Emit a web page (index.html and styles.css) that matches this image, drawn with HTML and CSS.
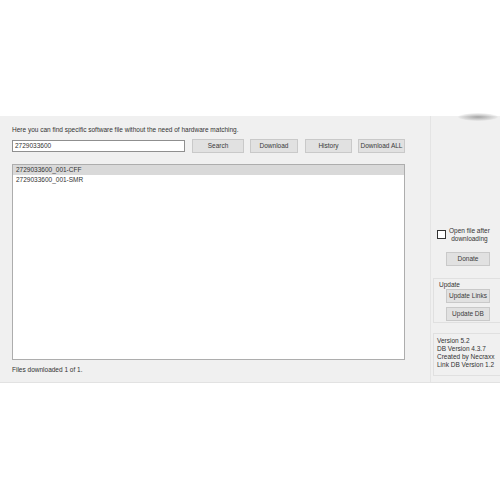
FILE: index.html
```html
<!DOCTYPE html>
<html>
<head>
<meta charset="utf-8">
<link rel="stylesheet" href="styles.css">
</head>
<body>
<div class="spacer"></div>
<div class="window">
  <div class="shadow"></div>
  <div class="main">
    <div class="intro">Here you can find specific software file without the need of hardware matching.</div>
    <div class="toolbar">
      <div class="input">2729033600</div>
      <div class="btn b-search">Search</div>
      <div class="btn b-dl">Download</div>
      <div class="btn b-hist">History</div>
      <div class="btn b-all">Download ALL</div>
    </div>
    <div class="list">
      <div class="row sel">2729033600_001-CFF</div>
      <div class="row">2729033600_001-SMR</div>
    </div>
    <div class="status">Files downloaded 1 of 1.</div>
  </div>
  <div class="side">
    <div class="check">
      <span class="box"></span>
      <span class="clabel">Open file after<br>downloading</span>
    </div>
    <div class="btn sbtn donate">Donate</div>
    <div class="group">
      <div class="glabel">Update</div>
      <div class="btn sbtn">Update Links</div>
      <div class="btn sbtn">Update DB</div>
    </div>
    <div class="info">
      <div>Version 5.2</div>
      <div>DB Version 4.3.7</div>
      <div>Created by Necraxx</div>
      <div>Link DB Version 1.2</div>
    </div>
  </div>
</div>
</body>
</html>
```

FILE: styles.css
```css
html, body {
  margin: 0;
  padding: 0;
  background: #ffffff;
  font-family: "Liberation Sans", "DejaVu Sans", sans-serif;
  font-size: 6.5px;
  color: #333333;
}
.spacer { height: 116px; }
.window {
  position: relative;
  height: 266px;
  background: #f0f0f0;
  border-bottom: 1px solid #e2e2e2;
  display: flex;
}
.shadow {
  position: absolute;
  left: 458px;
  top: -3px;
  width: 40px;
  height: 8px;
  border-radius: 50%;
  background: radial-gradient(ellipse at center, rgba(90,90,90,0.5) 0%, rgba(120,120,120,0.18) 55%, rgba(255,255,255,0) 75%);
}
.main {
  width: 430px;
  box-sizing: border-box;
  padding: 10px 0 0 12px;
  display: flex;
  flex-direction: column;
}
.intro { height: 12px; line-height: 8px; }
.toolbar {
  display: flex;
  align-items: center;
  height: 15px;
  margin-bottom: 11px;
}
.input {
  width: 173px;
  height: 12px;
  box-sizing: border-box;
  background: #fff;
  border: 1px solid #8f8f8f;
  line-height: 10px;
  padding-left: 2px;
  margin-right: 7px;
}
.btn {
  height: 14px;
  box-sizing: border-box;
  background: #e1e1e1;
  border: 1px solid #c9c9c9;
  line-height: 12px;
  text-align: center;
  color: #3a3a3a;
}
.b-search { width: 52px; margin-right: 6px; }
.b-dl { width: 48px; margin-right: 7px; }
.b-hist { width: 47px; margin-right: 6px; }
.b-all { width: 47px; }
.list {
  width: 393px;
  height: 196px;
  box-sizing: border-box;
  background: #fff;
  border: 1px solid #adadad;
}
.row {
  height: 10px;
  line-height: 10px;
  padding-left: 3px;
}
.row.sel { background: #d9d9d9; }
.status { margin-top: 5px; line-height: 10px; }
.side {
  flex: 1;
  border-left: 1px solid #e4e4e4;
  padding: 111px 0 0 2px;
  display: flex;
  flex-direction: column;
}
.check {
  display: flex;
  align-items: flex-start;
  padding-left: 4px;
  height: 20px;
}
.box {
  width: 7px;
  height: 7px;
  border: 1px solid #333;
  background: #fff;
  margin-top: 3px;
  margin-right: 3px;
  flex: none;
}
.clabel { text-align: center; line-height: 7.5px; }
.sbtn { width: 44px; margin-left: 13px; }
.donate { margin-top: 5px; }
.group {
  margin-top: 12px;
  height: 45px;
  box-sizing: border-box;
  border: 1px solid #e0e0e0;
  border-right: none;
  padding: 2px 0 0 0;
  display: flex;
  flex-direction: column;
  gap: 4px;
}
.glabel { padding-left: 5px; line-height: 7px; margin-bottom: -3px; }
.group .sbtn { margin-left: 12px; }
.info {
  margin-top: 10px;
  height: 43px;
  box-sizing: border-box;
  border: 1px solid #e0e0e0;
  border-right: none;
  padding: 3px 0 0 3px;
  line-height: 8px;
}
```
